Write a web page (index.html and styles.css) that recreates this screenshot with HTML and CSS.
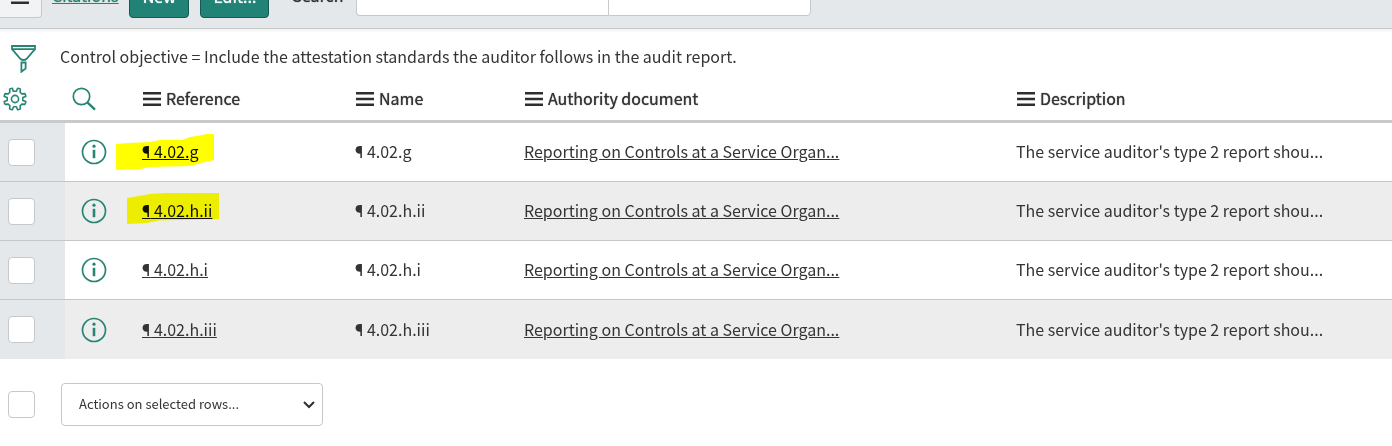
FILE: index.html
```
<!DOCTYPE html>
<html lang="en">

<head>
    <meta charset="UTF-8">
    <meta name="viewport" content="width=device-width, initial-scale=1.0">
    <title>Citations</title>
    <link rel="stylesheet" href="styles.css">
</head>

<body>
    <!-- Shared icons -->
    <svg class="sprite" aria-hidden="true">
        <symbol id="bars" viewBox="0 0 18 14">
            <path d="M0 1.3h18M0 7h18M0 12.7h18" stroke="currentColor" stroke-width="2.6" />
        </symbol>
        <symbol id="info" viewBox="0 0 26 26">
            <circle cx="13" cy="13" r="11.5" fill="none" stroke="currentColor" stroke-width="1.7" />
            <circle cx="13" cy="7.2" r="1.6" fill="currentColor" />
            <path d="M13 10.8v8.4" stroke="currentColor" stroke-width="2.6" />
        </symbol>
    </svg>

    <header class="toolbar">
        <button class="menu-btn" aria-label="List menu"><svg class="bars"><use href="#bars" /></svg></button>
        <a class="title" href="#">Citations</a>
        <button class="btn">New</button>
        <button class="btn">Edit...</button>
        <label class="search-label" for="searchText">Search</label>
        <div class="search-group">
            <select class="search-field" aria-label="Search field"></select>
            <input class="search-text" id="searchText" type="text">
        </div>
    </header>

    <div class="filter">
        <button class="icon-btn" aria-label="Show filter">
            <svg class="funnel" viewBox="0 0 25 28" fill="none" stroke="currentColor" stroke-width="1.8">
                <path d="M1 1h23v3.2L15.4 14q-1.2 1-2.9 1t-2.9-1L1 4.2zM1 4.2h23M10.4 17.5h4.2v6l-4.2 3.2z" />
            </svg>
        </button>
        <a class="crumb" href="#">Control objective = Include the attestation standards the auditor follows in the audit report.</a>
    </div>

    <table class="list">
        <colgroup>
            <col class="col-check">
            <col class="col-info">
            <col class="col-ref">
            <col class="col-name">
            <col class="col-doc">
            <col>
        </colgroup>
        <thead>
            <tr>
                <th class="gear-cell">
                    <button class="icon-btn" aria-label="Personalize list">
                        <svg class="gear" viewBox="0 0 24 24" fill="none" stroke="currentColor" stroke-width="1.6" stroke-linejoin="round">
                            <path d="M10.2 4.2L9.4 1.2Q8 1.3 6.6 2.1L6.9 5.2L5.2 6.900L2.1 6.6Q1.3 8 1.2 9.4L4.2 10.6V13.4L1.2 14.6Q1.3 16 2.1 17.4L5.2 17.1L6.9 18.8L6.6 21.9Q8 22.7 9.4 22.8L10.6 19.8H13.4L14.6 22.8Q16 22.7 17.4 21.9L17.1 18.8L18.8 17.1L21.9 17.4Q22.7 16 22.8 14.6L19.8 13.4V10.6L22.8 9.4Q22.7 8 21.9 6.6L18.8 6.9L17.1 5.2L17.4 2.1Q16 1.3 14.6 1.2L13.4 4.2z" />
                            <circle cx="12" cy="12" r="3.6" />
                        </svg>
                    </button>
                </th>
                <th class="search-cell">
                    <button class="icon-btn" aria-label="Search columns">
                        <svg class="lens" viewBox="0 0 24 24" fill="none" stroke="currentColor">
                            <circle cx="9.5" cy="9.5" r="8.2" stroke-width="1.7" />
                            <path d="M15.6 15.6L23 22.6" stroke-width="2.4" />
                        </svg>
                    </button>
                </th>
                <th><span class="heading"><svg class="bars"><use href="#bars" /></svg>Reference</span></th>
                <th><span class="heading"><svg class="bars"><use href="#bars" /></svg>Name</span></th>
                <th><span class="heading"><svg class="bars"><use href="#bars" /></svg>Authority document</span></th>
                <th><span class="heading"><svg class="bars"><use href="#bars" /></svg>Description</span></th>
            </tr>
        </thead>
        <tbody>
            <tr>
                <td class="check-cell"><input class="check" type="checkbox" aria-label="Select ¶ 4.02.g"></td>
                <td class="info-cell"><button class="icon-btn" aria-label="Preview"><svg class="info"><use href="#info" /></svg></button></td>
                <td>
                    <span class="marked">
                        <svg class="marker marker-g" viewBox="0 0 98 36">
                            <path d="M0 10L12 9L34 8L44 6H66L74 3L84 1.5L90 0H98V26L89 28L74 32L34 33L24 35L0 36z" />
                        </svg>
                        <a class="ref" href="#"><span class="pilcrow">¶</span> 4.02.g</a>
                    </span>
                </td>
                <td><span class="pilcrow">¶</span> 4.02.g</td>
                <td><a class="ref" href="#">Reporting on Controls at a Service Organ...</a></td>
                <td>The service auditor's type 2 report shou...</td>
            </tr>
            <tr>
                <td class="check-cell"><input class="check" type="checkbox" aria-label="Select ¶ 4.02.h.ii"></td>
                <td class="info-cell"><button class="icon-btn" aria-label="Preview"><svg class="info"><use href="#info" /></svg></button></td>
                <td>
                    <span class="marked">
                        <svg class="marker marker-h" viewBox="0 0 92 31">
                            <path d="M0 5L12 3L23 1L38 0H92V26L50 27L32 27.5L20 30L0 31z" />
                        </svg>
                        <a class="ref" href="#"><span class="pilcrow">¶</span> 4.02.h.ii</a>
                    </span>
                </td>
                <td><span class="pilcrow">¶</span> 4.02.h.ii</td>
                <td><a class="ref" href="#">Reporting on Controls at a Service Organ...</a></td>
                <td>The service auditor's type 2 report shou...</td>
            </tr>
            <tr>
                <td class="check-cell"><input class="check" type="checkbox" aria-label="Select ¶ 4.02.h.i"></td>
                <td class="info-cell"><button class="icon-btn" aria-label="Preview"><svg class="info"><use href="#info" /></svg></button></td>
                <td><a class="ref" href="#"><span class="pilcrow">¶</span> 4.02.h.i</a></td>
                <td><span class="pilcrow">¶</span> 4.02.h.i</td>
                <td><a class="ref" href="#">Reporting on Controls at a Service Organ...</a></td>
                <td>The service auditor's type 2 report shou...</td>
            </tr>
            <tr>
                <td class="check-cell"><input class="check" type="checkbox" aria-label="Select ¶ 4.02.h.iii"></td>
                <td class="info-cell"><button class="icon-btn" aria-label="Preview"><svg class="info"><use href="#info" /></svg></button></td>
                <td><a class="ref" href="#"><span class="pilcrow">¶</span> 4.02.h.iii</a></td>
                <td><span class="pilcrow">¶</span> 4.02.h.iii</td>
                <td><a class="ref" href="#">Reporting on Controls at a Service Organ...</a></td>
                <td>The service auditor's type 2 report shou...</td>
            </tr>
        </tbody>
    </table>

    <footer class="actions">
        <input class="check" type="checkbox" aria-label="Select all rows">
        <div class="select-wrap">
            <select class="action-select" aria-label="Actions on selected rows">
                <option>Actions on selected rows...</option>
            </select>
            <svg class="chevron" viewBox="0 0 12 8">
                <path d="M1 1l5 5 5-5" fill="none" stroke="currentColor" stroke-width="2" />
            </svg>
        </div>
    </footer>
</body>

</html>
```

FILE: styles.css
```
* {
    box-sizing: border-box;
}

body {
    margin: 0;
    background-color: #fff;
    color: #343434;
    font-family: "Noto Sans CJK SC", "Open Sans", sans-serif;
    font-size: 16px;
    line-height: 24px;
}

button,
input,
select {
    margin: 0;
    color: inherit;
    font: inherit;
}

svg {
    display: block;
}

.sprite {
    display: none;
}

/* toolbar, scrolled so that only its lower edge shows */
.toolbar {
    display: flex;
    align-items: flex-end;
    height: 29px;
    padding-bottom: 10px;
    overflow: hidden;
    background-color: #e4e8eb;
    border-bottom: 1px solid #c6c8ca;
}

.menu-btn {
    width: 42px;
    height: 42px;
    padding: 0 11px;
    background-color: #f1f3f5;
    border: 1px solid #c6c8ca;
    border-left: 0;
    border-radius: 0 4px 4px 0;
}

.bars {
    width: 18px;
    height: 14px;
    color: #2e2e2e;
}

.title,
.btn,
.search-label,
.heading {
    font-weight: 400;
    text-shadow: 0 0 1px currentColor;
}

.title {
    margin: 0 11px 11px 10px;
    color: #278574;
}

.btn {
    width: 60px;
    height: 42px;
    margin-right: 11px;
    padding: 0 0 2px;
    background-color: #218376;
    border: 1px solid #17594f;
    border-radius: 4px;
    color: #fff;
}

.btn + .btn {
    width: 69px;
}

.search-label {
    margin: 0 13px 11px 12px;
}

.search-group {
    display: flex;
    width: 455px;
    height: 40px;
    margin-bottom: 2px;
}

.search-field,
.search-text {
    flex: 1;
    min-width: 0;
    appearance: none;
    background-color: #fff;
    border: 1px solid #c6c8ca;
}

.search-field {
    flex: 0 0 252px;
    border-right: 0;
    border-radius: 4px 0 0 4px;
}

.search-text {
    border-radius: 0 4px 4px 0;
}

/* filter row */
.filter {
    display: flex;
    align-items: center;
    gap: 24px;
    height: 48px;
    padding: 8px 11px 0;
    background-image: linear-gradient(#f1f1f1, #fff 4px);
}

.crumb {
    padding-bottom: 2px;
    color: inherit;
    text-decoration: none;
}

.icon-btn {
    display: block;
    padding: 0;
    background: none;
    border: 0;
    color: #278574;
}

.funnel {
    width: 25px;
    height: 28px;
    margin-top: 3px;
}

.gear,
.lens {
    width: 24px;
    height: 24px;
}

.info {
    width: 26px;
    height: 26px;
}

/* list */
.list {
    width: 100%;
    table-layout: fixed;
    border-collapse: separate;
    border-spacing: 0;
}

.col-check {
    width: 65px;
}

.col-info {
    width: 69px;
}

.col-ref {
    width: 213px;
}

.col-name {
    width: 169px;
}

.col-doc {
    width: 492px;
}

th,
td {
    padding: 0 8px 2px;
    text-align: left;
    white-space: nowrap;
}

th {
    height: 46px;
    border-bottom: 3px solid #cacaca;
}

td {
    height: 59px;
    border-bottom: 1px solid #c4c6c8;
}

tbody tr:last-child td {
    border-bottom: 0;
}

tbody tr:nth-child(even) {
    background-color: #ededed;
}

.heading {
    display: flex;
    align-items: center;
    gap: 5px;
    padding-left: 1px;
}

.heading .bars {
    margin-top: 2px;
}

th.gear-cell {
    padding: 0 3px;
}

th.search-cell {
    padding: 0 7px;
}

td.info-cell {
    padding: 0 16px;
}

td.check-cell {
    padding: 0 8px;
    background-color: #e4e8eb;
}

.check {
    display: block;
    width: 27px;
    height: 27px;
    appearance: none;
    background-color: #fff;
    border: 1px solid #c6c8ca;
    border-radius: 4px;
}

.ref {
    color: inherit;
}

.pilcrow {
    font-family: Roboto, sans-serif;
    font-size: 17px;
    line-height: 1;
}

/* highlighter strokes over the reference links */
.marked {
    position: relative;
    color: #111;
}

.marker {
    position: absolute;
    fill: #ff0;
    mix-blend-mode: multiply;
}

.marker-g {
    top: -5px;
    left: -26px;
    width: 98px;
    height: 36px;
}

.marker-h {
    top: -5px;
    left: -15px;
    width: 92px;
    height: 31px;
}

/* footer */
.actions {
    display: flex;
    align-items: center;
    gap: 26px;
    padding: 24px 8px;
}

.select-wrap {
    position: relative;
}

.action-select {
    display: block;
    width: 262px;
    height: 43px;
    padding: 0 17px 2px;
    appearance: none;
    background-color: #fff;
    border: 1px solid #c6c8ca;
    border-radius: 4px;
    font-size: 13px;
}

.chevron {
    position: absolute;
    top: 18px;
    right: 8px;
    width: 12px;
    height: 8px;
    color: #2e2e2e;
    pointer-events: none;
}
```
